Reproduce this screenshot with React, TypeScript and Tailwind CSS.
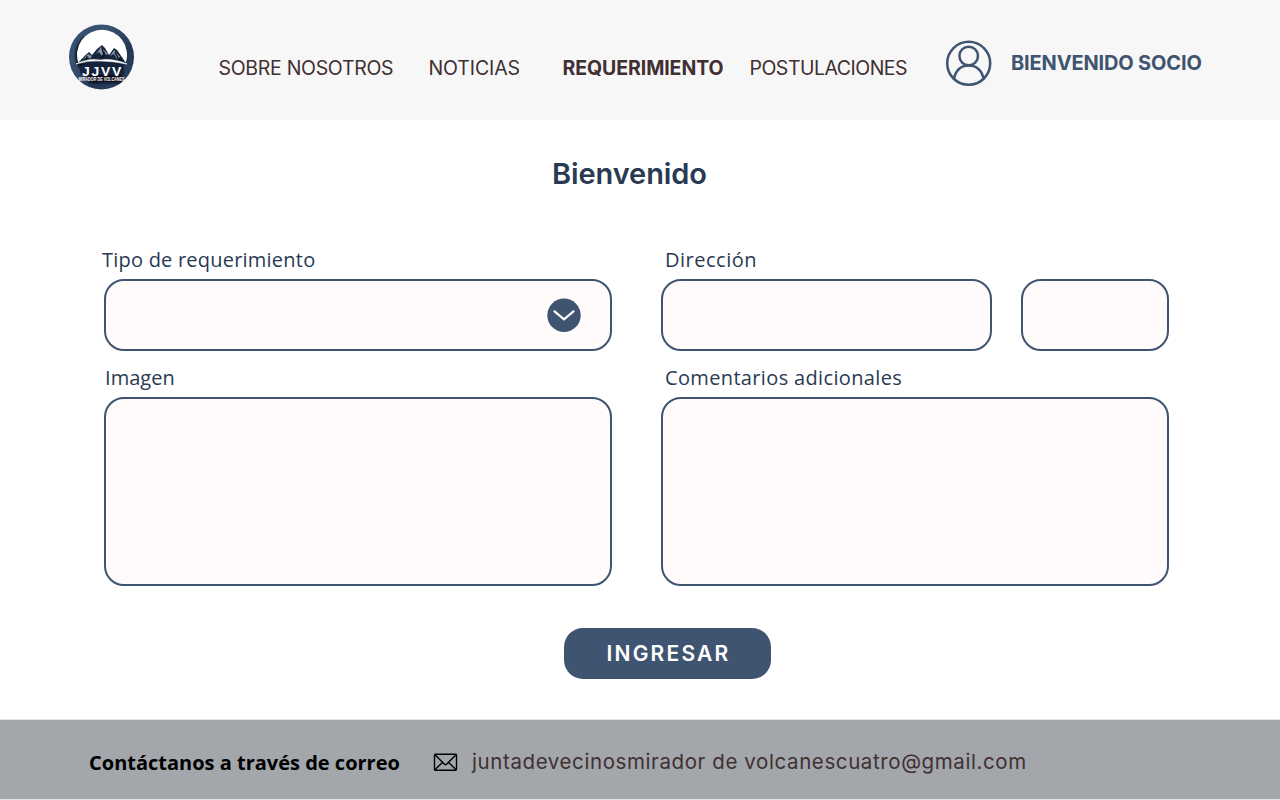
import React from "react";

function Logo() {
  return (
    <svg className="size-[66px] shrink-0 overflow-visible" viewBox="0 0 66 66" role="img" aria-label="JJVV">
      <defs>
        <linearGradient id="ring" x1="0" y1="0" x2="1" y2="1">
          <stop offset="0" stopColor="#304a6b" />
          <stop offset="0.3" stopColor="#3b5473" />
          <stop offset="0.65" stopColor="#223755" />
          <stop offset="1" stopColor="#2b4465" />
        </linearGradient>
        <clipPath id="disc"><circle cx="33.500" cy="33" r="32.400" /></clipPath>
        <filter id="soft"><feGaussianBlur stdDeviation="1.3" /></filter>
      </defs>
      <circle cx="33.500" cy="33" r="32.500" fill="url(#ring)" />
      <g clipPath="url(#disc)">
        <path d="M18 12C5 20 5 37 12 44L22 59H54L54 39H14Z" fill="#07101e" filter="url(#soft)" />
        <path d="M10.200 38.500A25 25 0 1 1 57.800 38.500Z" fill="#fff" />
        <path d="M10 39L17 31.500L21 28L24 31L29 25L34 21L37 24L41 31L46 24L49 26L58 39Z" fill="#15253c" />
        <path d="M20 30L15 35L20 33L22 35L24 32ZM33 23L28 30L31 28L34 32L36 27L38 31L40 30ZM46 26L42 32L46 30L49 35L52 33Z" fill="#8291a5" />
        <path d="M34 24L36 31L33 34M47 28L50 34L54 37M19 32L18 37" fill="none" stroke="#050b14" strokeWidth="1.2" />
        <path d="M8 40Q20 34 32 36Q45 34 59 40Q44 37 33 37Q20 36 8 40Z" fill="#fff" stroke="#fff" strokeWidth="0.6" />
        <path d="M11 42Q32 36 56 41V51H13Z" fill="#14243e" />
      </g>
      <g fontFamily="Liberation Sans, sans-serif" fontWeight="700">
        <text x="14" y="51.500" fontSize="12.500" textLength="41" lengthAdjust="spacingAndGlyphs" letterSpacing="1.500" fill="#fff">JJVV</text>
        <text x="10.500" y="57.400" fontSize="4.800" textLength="46" lengthAdjust="spacingAndGlyphs" fill="#fff">MIRADOR DE VOLCANES</text>
      </g>
    </svg>
  );
}

function UserIcon() {
  return (
    <svg className="size-[46px] shrink-0" viewBox="0 0 46 46" fill="none" stroke="#3f5470" strokeWidth="2.500">
      <circle cx="22.700" cy="23.300" r="21.500" />
      <circle cx="22.700" cy="16" r="9.300" />
      <path d="M8 39.300C9.100 30.800 14.700 25.600 22.700 25.600S36.400 30.800 37.500 39.300" />
    </svg>
  );
}

const box = "rounded-[20px] border-2 border-[#3f5470] bg-[#fffbfa] outline-none";
const label = "h-[28px] whitespace-nowrap text-[20px] leading-[28px] text-[#293a52]";

export default function App() {
  return (
    <div className="flex h-[800px] w-[1280px] flex-col overflow-hidden bg-white font-['Inter',sans-serif]">
      <header className="flex h-[120px] shrink-0 bg-[#f7f7f7] pl-[68px] pt-[24px]">
        <Logo />
        <nav className="ml-[84.5px] flex pt-[30px] text-[19.5px] font-normal leading-[28px] text-[#403033]">
          <a className="w-[210px] whitespace-nowrap tracking-[-0.3px]">SOBRE NOSOTROS</a>
          <a className="w-[134px] whitespace-nowrap tracking-[-0.1px]">NOTICIAS</a>
          <a className="w-[187px] whitespace-nowrap font-bold tracking-[-0.08px]">REQUERIMIENTO</a>
          <a className="w-[196.5px] whitespace-nowrap tracking-[-0.5px]">POSTULACIONES</a>
        </nav>
        <div className="flex h-[46px] gap-[19px] pt-[16px]">
          <UserIcon />
          <span className="mt-[9px] h-[28px] whitespace-nowrap text-[20px] font-bold leading-[28px] tracking-[-0.15px] text-[#3f5470]">BIENVENIDO SOCIO</span>
        </div>
      </header>

      <main className="flex h-[599px] shrink-0 flex-col pl-[104px]">
        <h1 className="ml-[448px] mt-[36px] h-[36px] text-[29px] font-semibold leading-[36px] tracking-[-0.1px] text-[#293a52]">Bienvenido</h1>
        <form className="mt-[54px] flex flex-col font-['Open_Sans',sans-serif]">
          <div className="flex gap-[49px]">
            <div className="flex w-[508px] flex-col">
              <label className={`${label} -ml-[2px] tracking-[0.22px]`}>Tipo de requerimiento</label>
              <button type="button" className={`${box} mt-[5px] flex h-[72px] items-center justify-end pr-[29px]`}>
                <svg className="size-[34px]" viewBox="0 0 34 34">
                  <circle cx="17" cy="17.300" r="16.700" fill="#3f5470" />
                  <path d="M7.500 13.300L17 21.300L26.500 13.300" fill="none" stroke="#fff" strokeWidth="2.200" strokeLinecap="round" />
                </svg>
              </button>
            </div>
            <div className="flex flex-col">
              <label className={`${label} ml-[4px] tracking-[0.5px]`}>Dirección</label>
              <div className="mt-[5px] flex gap-[29px]">
                <input aria-label="Dirección" className={`${box} h-[72px] w-[331px]`} />
                <input aria-label="Número" className={`${box} h-[72px] w-[148px]`} />
              </div>
            </div>
          </div>
          <div className="mt-[13px] flex gap-[49px]">
            <div className="flex w-[508px] flex-col">
              <label className={`${label} ml-px tracking-[0.05px]`}>Imagen</label>
              <div className={`${box} mt-[5px] h-[189px]`} />
            </div>
            <div className="flex w-[508px] flex-col">
              <label className={`${label} ml-[4px] tracking-[0.35px]`}>Comentarios adicionales</label>
              <textarea aria-label="Comentarios" className={`${box} mt-[5px] h-[189px] resize-none`} />
            </div>
          </div>
          <button type="button" className="ml-[460px] mt-[42px] h-[51px] w-[207px] rounded-[19px] bg-[#3f5470] pl-[2px] font-['Inter',sans-serif] text-[21px] font-semibold tracking-[2.200px] text-white">INGRESAR</button>
        </form>
      </main>

      <footer className="flex h-[81px] shrink-0 border-y border-[#e3e4e5] bg-[#a3a6ab] pl-[89px] pt-[28px] leading-[28px]">
        <strong className="mt-px w-[344px] whitespace-nowrap font-['Open_Sans',sans-serif] text-[20px] font-bold text-black">Contáctanos a través de correo</strong>
        <svg className="mt-[5px] h-[18px] w-[25px]" viewBox="0 0 25 18" fill="none" stroke="#000" strokeWidth="1.400">
          <rect x="1.500" y="1.300" width="22" height="16" rx="1" />
          <path d="M2 1.800L11.500 11.300Q12.500 12.300 13.500 11.300L23 1.800M2 16.800L9.500 9.300M23 16.800L15.500 9.300" />
        </svg>
        <span className="ml-[14px] whitespace-nowrap text-[20.5px] font-normal tracking-[0.600px] text-[#403033]">juntadevecinosmirador de volcanescuatro@gmail.com</span>
      </footer>
    </div>
  );
}
